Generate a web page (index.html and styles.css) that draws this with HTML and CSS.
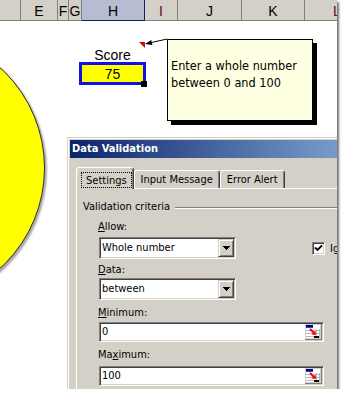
FILE: index.html
```html
<!DOCTYPE html>
<html lang="en">
<head>
    <meta charset="UTF-8">
    <title>Score - Data Validation</title>
    <link rel="stylesheet" href="styles.css">
</head>
<body>

    <div class="shot">
        <!-- cabecera de columnas -->
        <div class="colheads">
            <div class="ch c-d"></div>
            <div class="ch c-e">E</div>
            <div class="ch c-f">F</div>
            <div class="ch c-g">G</div>
            <div class="ch c-h sel">H</div>
            <div class="ch c-i odd">I</div>
            <div class="ch c-j">J</div>
            <div class="ch c-k">K</div>
            <div class="ch c-l odd">L</div>
        </div>

        <div class="sheet">
            <div class="score">
                <div class="score-label">Score</div>
                <div class="score-value">75<span class="handle"></span></div>
            </div>
        </div>

        <div class="circle"></div>

        <svg class="arrow" width="34" height="16" viewBox="0 0 34 16">
            <path d="M3 8H9V14Z" fill="#e00000"/>
            <line x1="31" y1="5" x2="15" y2="8.6" stroke="#000" stroke-width="1"/>
            <path d="M9 10L16.4 10.9L15.3 6Z" fill="#000"/>
        </svg>

        <div class="comment">Enter a whole number<br>between 0 and 100</div>

        <!-- ventana Data Validation -->
        <div class="dialog">
            <div class="titlebar">Data Validation</div>
            <div class="tabs">
                <div class="tab active"><span class="focus">Settings</span></div>
                <div class="tab">Input Message</div>
                <div class="tab">Error Alert</div>
            </div>
            <div class="panel">
                <div class="group">
                    <span>Validation criteria</span>
                    <div class="etch"></div>
                </div>
                <div class="fields">
                    <label class="lbl lbl-allow"><u>A</u>llow:</label>
                    <div class="row">
                        <div class="combo combo-allow">
                            <span class="combo-text">Whole number</span>
                            <span class="drop"><svg width="7" height="4" viewBox="0 0 7 4"><path d="M0 0H7V1H6V2H5V3H4V4H3V3H2V2H1V1H0Z" fill="#000"/></svg></span>
                        </div>
                        <div class="check">
                            <span class="box"><svg width="9" height="9" viewBox="0 0 9 9"><path d="M1 3.5L3.5 6L8 1.5" fill="none" stroke="#000" stroke-width="1.8"/></svg></span>
                            <span>Ignore blank</span>
                        </div>
                    </div>

                    <label class="lbl lbl-data"><u>D</u>ata:</label>
                    <div class="combo combo-data">
                        <span class="combo-text">between</span>
                        <span class="drop"><svg width="7" height="4" viewBox="0 0 7 4"><path d="M0 0H7V1H6V2H5V3H4V4H3V3H2V2H1V1H0Z" fill="#000"/></svg></span>
                    </div>

                    <label class="lbl lbl-min"><u>M</u>inimum:</label>
                    <div class="field field-min">
                        <span class="field-text">0</span>
                        <svg class="refbtn" width="17" height="16" viewBox="0 0 17 16">
                            <rect width="17" height="16" fill="#d4d0c8"/>
                            <rect x="1" y="1" width="14" height="13" fill="#fff"/>
                            <path d="M1 6.5H15M1 9.5H15M1 12.5H15M11.5 5V14M14.5 5V14" stroke="#b8b8b8"/>
                            <rect x="1" y="1" width="7" height="2" fill="#000080"/>
                            <rect x="1" y="3" width="7" height="1" fill="#2040ff"/>
                            <path d="M5 5L9.5 9.5" stroke="#f00" stroke-width="2"/>
                            <path d="M11 11L6.5 10.5L10.5 6.5Z" fill="#f00"/>
                            <rect x="9" y="12" width="5" height="2" fill="#000"/>
                            <path d="M0 15.5H17M16.5 0V16" stroke="#808080"/>
                        </svg>
                    </div>

                    <label class="lbl lbl-max">Ma<u>x</u>imum:</label>
                    <div class="field field-max">
                        <span class="field-text">100</span>
                        <svg class="refbtn" width="17" height="16" viewBox="0 0 17 16">
                            <rect width="17" height="16" fill="#d4d0c8"/>
                            <rect x="1" y="1" width="14" height="13" fill="#fff"/>
                            <path d="M1 6.5H15M1 9.5H15M1 12.5H15M11.5 5V14M14.5 5V14" stroke="#b8b8b8"/>
                            <rect x="1" y="1" width="7" height="2" fill="#000080"/>
                            <rect x="1" y="3" width="7" height="1" fill="#2040ff"/>
                            <path d="M5 5L9.5 9.5" stroke="#f00" stroke-width="2"/>
                            <path d="M11 11L6.5 10.5L10.5 6.5Z" fill="#f00"/>
                            <rect x="9" y="12" width="5" height="2" fill="#000"/>
                            <path d="M0 15.5H17M16.5 0V16" stroke="#808080"/>
                        </svg>
                    </div>
                </div>
            </div>
        </div>
    </div>

</body>
</html>
```

FILE: styles.css
```css
/* Reset */
* {
    margin: 0;
    padding: 0;
    box-sizing: border-box;
}

body {
    background: #fff;
    font-family: 'Liberation Sans', Arial, sans-serif;
}

/* Captura con sombra */
.shot {
    position: relative;
    width: 337px;
    height: 389px;
    overflow: hidden;
    background: #fff;
    box-shadow: 2px 2px 2px rgba(0, 0, 0, 0.55);
}

/* Cabecera de columnas */
.colheads {
    display: flex;
    height: 21px;
    background: #d4d0c8;
    border-bottom: 1px solid #808080;
}

.ch {
    flex: none;
    height: 20px;
    padding-top: 3px;
    line-height: 17px;
    font-size: 14px;
    text-align: center;
    color: #000;
    border-right: 1px solid #808080;
}

.c-d { width: 21px; }
.c-e { width: 37px; }
.c-f { width: 11px; }
.c-g { width: 13px; }
.c-h { width: 63px; }
.c-i { width: 33px; }
.c-j { width: 64px; }
.c-k { width: 63px; }
.c-l { width: 40px; text-align: left; padding-left: 28px; }

.ch.sel {
    background: #b6bdd2;
    border-right-color: #0a246a;
    box-shadow: 0 1px 0 #0a246a;
}

.ch.odd {
    color: #5a0838;
}

/* Hoja */
.sheet {
    padding: 26px 0 0 79px;
}

.score {
    width: 67px;
}

.score-label {
    font-size: 14px;
    line-height: 16px;
    text-align: center;
}

.score-value {
    position: relative;
    height: 23px;
    margin-top: -1px;
    padding-top: 1px;
    border: 3px solid #1010e8;
    background: #ffff00;
    font-size: 14px;
    line-height: 16px;
    text-align: center;
}

.handle {
    position: absolute;
    right: -4px;
    bottom: -5px;
    width: 6px;
    height: 6px;
    background: #000;
}

/* Forma circular */
.circle {
    position: absolute;
    left: -227px;
    top: 32px;
    width: 272px;
    height: 272px;
    border-radius: 50%;
    background: #ffff00;
    border: 1px solid #303030;
    box-shadow: 2px 2px 2px rgba(0, 0, 0, 0.35);
}

/* Comentario */
.arrow {
    position: absolute;
    left: 136px;
    top: 34px;
}

.comment {
    position: absolute;
    left: 167px;
    top: 39px;
    width: 146px;
    height: 82px;
    padding: 17px 0 0 3px;
    background: #ffffe1;
    border: 1px solid #000;
    box-shadow: 4px 4px 0 #000;
    font-family: 'DejaVu Sans Condensed', 'DejaVu Sans', sans-serif;
    font-stretch: condensed;
    font-size: 12.6px;
    line-height: 17px;
    color: #000;
}

/* Ventana de dialogo */
.dialog {
    position: absolute;
    left: 67px;
    top: 137px;
    width: 380px;
    height: 300px;
    padding: 2px;
    background: #d4d0c8;
    border: 1px solid;
    border-color: #d4d0c8 #404040 #404040 #d4d0c8;
    box-shadow: inset 1px 1px 0 #fff, inset -1px -1px 0 #808080;
    font-family: 'DejaVu Sans Condensed', 'DejaVu Sans', sans-serif;
    font-stretch: condensed;
    font-size: 11px;
    color: #000;
}

.titlebar {
    height: 18px;
    padding-left: 2px;
    line-height: 18px;
    font-weight: bold;
    color: #fff;
    background: linear-gradient(to right, #0a246a, #a6caf0);
}

/* Pestañas */
.tabs {
    display: flex;
    align-items: flex-end;
    height: 21px;
    margin: 9px 0 0 6px;
    position: relative;
    z-index: 1;
}

.tab {
    height: 18px;
    padding: 1px 6px 0;
    line-height: 16px;
    white-space: nowrap;
    background: #d4d0c8;
    border: 1px solid;
    border-bottom: none;
    border-color: #fff #404040 #d4d0c8 #fff;
    border-radius: 3px 3px 0 0;
    box-shadow: inset -1px 0 0 #808080;
}

.tab.active {
    height: 22px;
    margin-bottom: -1px;
    padding: 4px 1px 0 4px;
}

.focus {
    display: inline-block;
    height: 16px;
    padding: 1px 4px 0;
    line-height: 14px;
    border: 1px dotted #000;
}

.panel {
    height: 260px;
    margin-left: 6px;
    padding: 11px 0 0 6px;
    border-left: 1px solid #fff;
    border-top: 1px solid #fff;
}

.group {
    display: flex;
    line-height: 13px;
}

.etch {
    flex: 1;
    height: 2px;
    margin: 7px 0 0 5px;
    border-top: 1px solid #808080;
    border-bottom: 1px solid #fff;
}

/* Campos */
.fields {
    padding-left: 15px;
}

.lbl {
    display: block;
    line-height: 13px;
}

.lbl-allow { margin-top: 7px; }
.lbl-data { margin-top: 4px; }
.lbl-min { margin-top: 6px; }
.lbl-max { margin-top: 6px; }

.row {
    display: flex;
    align-items: center;
    margin-top: 4px;
}

.combo,
.field {
    display: flex;
    align-items: center;
    margin-left: 1px;
    background: #fff;
    border: 1px solid;
    border-color: #808080 #fff #fff #808080;
    box-shadow: inset 1px 1px 0 #404040, inset -1px -1px 0 #d4d0c8;
    padding: 1px;
}

.combo {
    width: 137px;
    height: 22px;
}

.combo-data {
    margin-top: 2px;
}

.combo-text,
.field-text {
    flex: 1;
    padding-left: 1px;
    line-height: 18px;
}

.drop {
    display: flex;
    align-items: center;
    justify-content: center;
    width: 16px;
    height: 18px;
    background: #d4d0c8;
    border: 1px solid;
    border-color: #d4d0c8 #404040 #404040 #d4d0c8;
    box-shadow: inset 1px 1px 0 #fff, inset -1px -1px 0 #808080;
}

.check {
    display: flex;
    align-items: center;
    margin-left: 76px;
    white-space: nowrap;
}

.check .box {
    display: flex;
    align-items: center;
    justify-content: center;
    width: 13px;
    height: 13px;
    margin-right: 5px;
    background: #fff;
    border: 1px solid;
    border-color: #808080 #fff #fff #808080;
    box-shadow: inset 1px 1px 0 #404040, inset -1px -1px 0 #d4d0c8;
}

.field {
    width: 225px;
    height: 20px;
}

.field-min { margin-top: 3px; }
.field-max { margin-top: 5px; }

.refbtn {
    flex: none;
}
```
